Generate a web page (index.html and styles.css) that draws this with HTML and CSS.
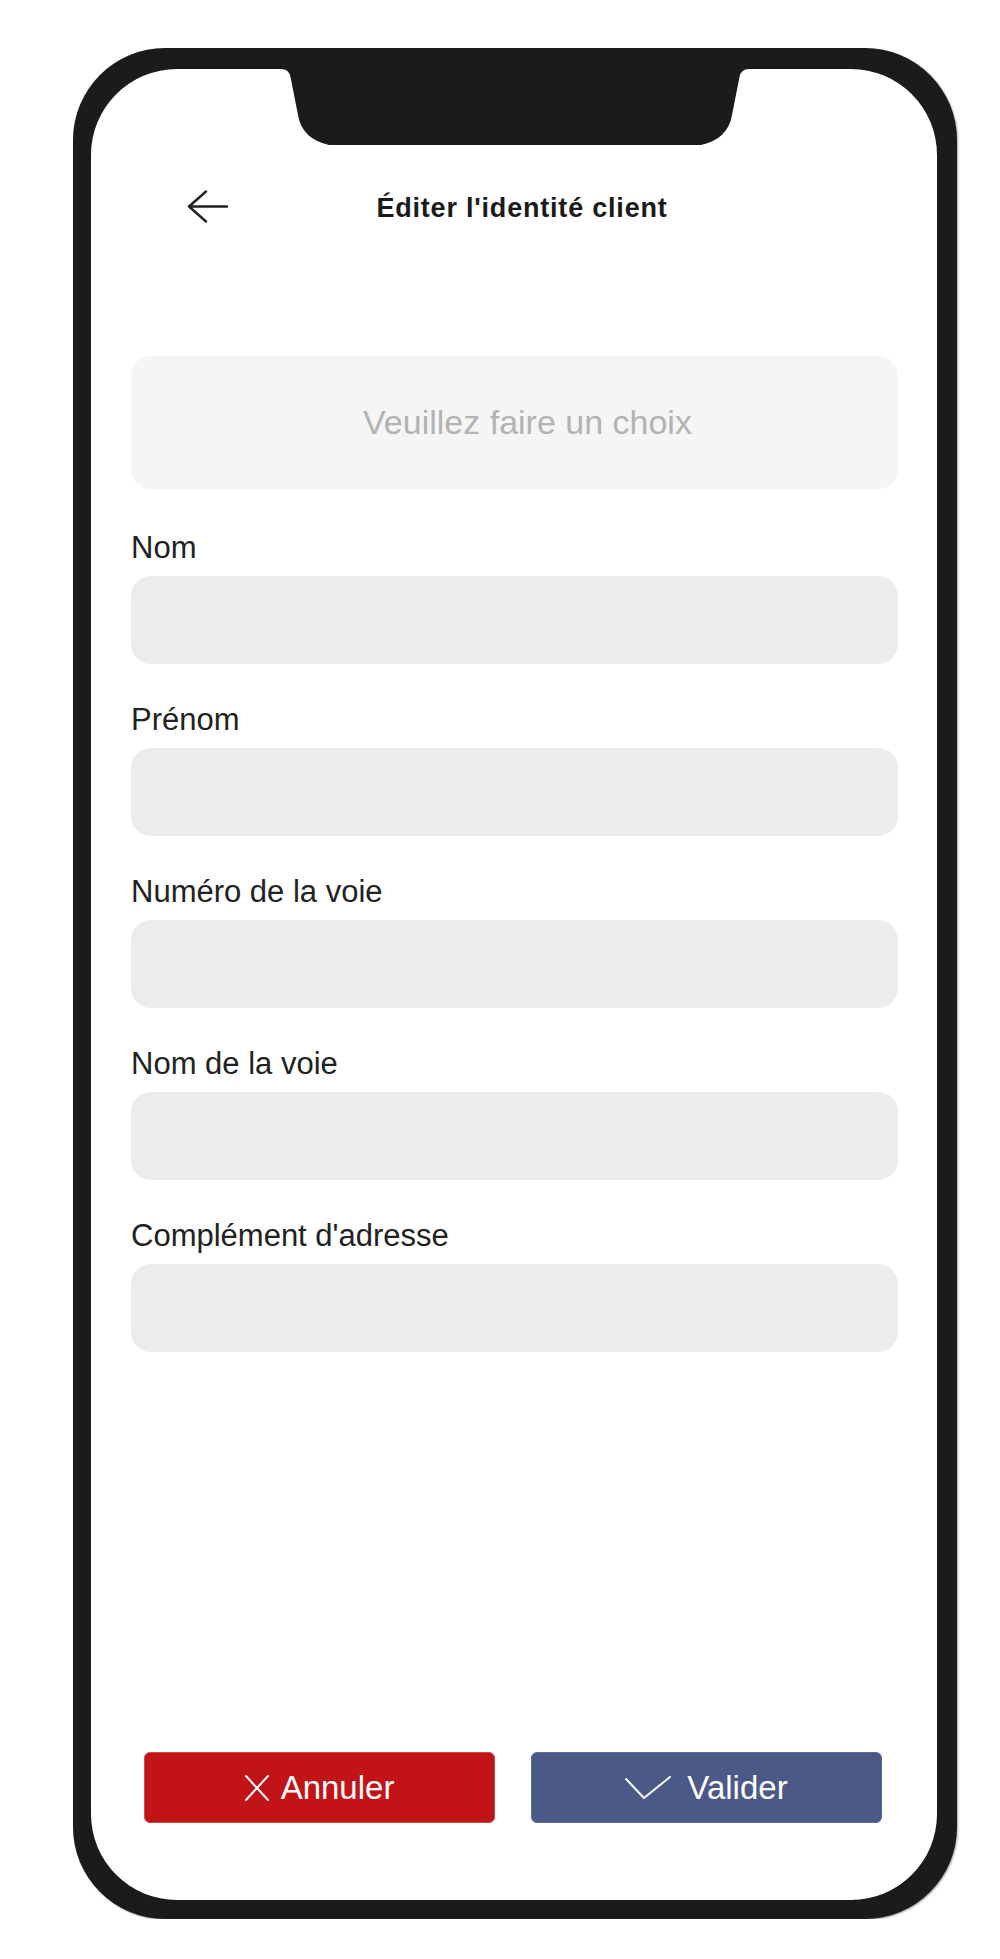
FILE: index.html
```html
<!DOCTYPE html>
<html lang="fr">
<head>
    <meta charset="UTF-8">
    <meta name="viewport" content="width=device-width, initial-scale=1.0">
    <title>Éditer l'identité client</title>
    <link rel="stylesheet" href="styles.css">
</head>
<body>
    <div class="page">
        <div class="telephone">
            <div class="ecran">
                <svg class="encoche" viewBox="0 0 846 80" width="846" height="80" aria-hidden="true">
                    <path d="M178 -2 V0 H190 Q198 0 199.5 8 L207 46 Q211 70 238 76 H610 Q637 70 641 46 L648.5 8 Q650 0 658 0 H670 V-2 Z"/>
                </svg>
                <header class="entete">
                    <button class="retour" type="button" aria-label="Retour">
                        <svg viewBox="0 0 42 34" width="42" height="34">
                            <path d="M2 16.5 H40 M19 1.5 L2 16.5 L19 31.5" />
                        </svg>
                    </button>
                    <h1>Éditer l'identité client</h1>
                </header>
                <form class="formulaire">
                    <div class="choix">Veuillez faire un choix</div>
                    <label for="nom">Nom</label>
                    <input type="text" id="nom" name="nom">
                    <label for="prenom">Prénom</label>
                    <input type="text" id="prenom" name="prenom">
                    <label for="numero_voie">Numéro de la voie</label>
                    <input type="text" id="numero_voie" name="numero_voie">
                    <label for="nom_voie">Nom de la voie</label>
                    <input type="text" id="nom_voie" name="nom_voie">
                    <label for="complement">Complément d'adresse</label>
                    <input type="text" id="complement" name="complement">
                </form>
                <div class="actions">
                    <button class="btn btn-annuler" type="button">
                        <svg viewBox="0 0 24 26" width="24" height="26">
                            <path d="M1 1 L23 25 M23 1 L1 25" />
                        </svg>
                        Annuler
                    </button>
                    <button class="btn btn-valider" type="button">
                        <svg viewBox="0 0 46 24" width="46" height="24">
                            <path d="M1 3 L19 22 L45 1" />
                        </svg>
                        Valider
                    </button>
                </div>
            </div>
        </div>
    </div>
</body>
</html>
```

FILE: styles.css
```css
body {
    margin: 0;
    background-color: #ffffff;
    font-family: "Liberation Sans", Arial, sans-serif;
    color: #1e1e1e;
}
.page {
    padding: 48px 0 0 73px;
}
.telephone {
    width: 884px;
    height: 1871px;
    box-sizing: border-box;
    padding: 21px 20px 19px 18px;
    background-color: #1b1b1b;
    border-radius: 92px;
    box-shadow: 1px 1px 2px rgba(0, 0, 0, 0.35);
}
.ecran {
    position: relative;
    height: 100%;
    background-color: #ffffff;
    border-radius: 86px;
    overflow: hidden;
    display: flex;
    flex-direction: column;
}
.encoche {
    position: absolute;
    top: 0;
    left: 0;
    fill: #1b1b1b;
}

/* En-tête */
.entete {
    display: flex;
    align-items: center;
    height: 60px;
    margin-top: 108px;
    padding: 0 122px 0 96px;
}
.retour {
    width: 42px;
    height: 34px;
    padding: 0;
    border: none;
    background: none;
    cursor: pointer;
}
.retour svg {
    display: block;
    fill: none;
    stroke: #222222;
    stroke-width: 2.4;
    stroke-linecap: round;
    stroke-linejoin: round;
}
.entete h1 {
    flex: 1;
    margin: 0;
    padding-top: 3px;
    text-align: center;
    font-size: 27px;
    line-height: 57px;
    letter-spacing: 0.8px;
    font-weight: 700;
    color: #1a1a1a;
}

/* Formulaire */
.formulaire {
    margin-top: 119px;
    padding: 0 39px 0 40px;
}
.choix {
    height: 133px;
    padding-left: 26px;
    border-radius: 20px;
    background-color: #f5f5f5;
    color: #b3b3b3;
    font-size: 34px;
    line-height: 133px;
    text-align: center;
    margin-bottom: 41px;
}
.formulaire label {
    display: block;
    margin-top: 38px;
    margin-bottom: 10px;
    font-size: 31px;
    line-height: 36px;
    color: #222222;
}
.formulaire input {
    display: block;
    width: 100%;
    height: 88px;
    box-sizing: border-box;
    padding: 0 24px;
    border: none;
    border-radius: 20px;
    background-color: #ececec;
    font-family: inherit;
    font-size: 31px;
    color: #222222;
}

/* Boutons */
.actions {
    display: flex;
    gap: 36px;
    margin-top: auto;
    padding: 0 55px 77px 53px;
}
.btn {
    flex: 1;
    display: flex;
    align-items: center;
    justify-content: center;
    height: 71px;
    box-sizing: border-box;
    border-radius: 6px;
    font-family: inherit;
    font-size: 33px;
    color: #ffffff;
    cursor: pointer;
}
.btn svg {
    fill: none;
    stroke: #ffffff;
    stroke-width: 2;
    stroke-linecap: round;
    stroke-linejoin: round;
}
.btn-annuler {
    gap: 12px;
    background-color: #c21416;
    border: 1px solid #d04a4c;
}
.btn-valider {
    gap: 16px;
    background-color: #4a5987;
    border: 1px solid #5d6b95;
}
```
